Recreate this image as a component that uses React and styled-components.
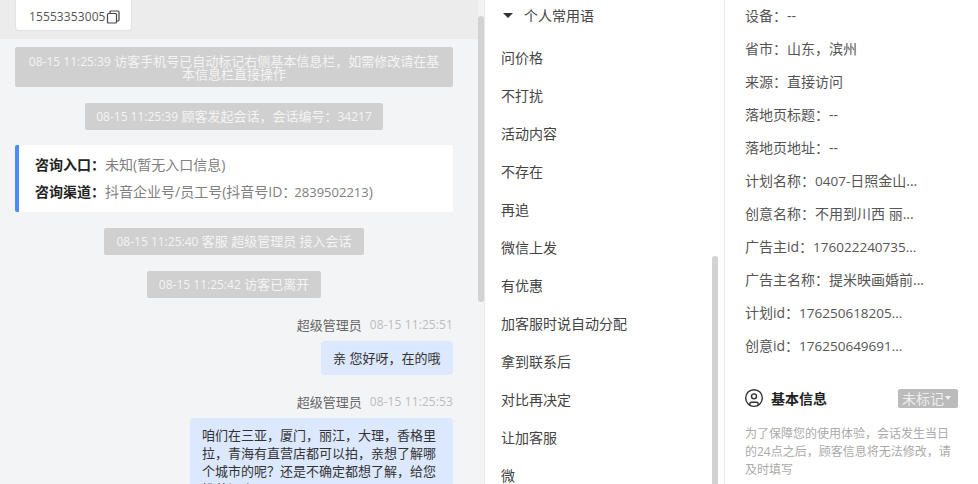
import styled, { createGlobalStyle } from 'styled-components';
import { CircleUser } from 'lucide-react';

const fontStack = '"Open Sans", "Noto Sans CJK SC", sans-serif';

const GlobalStyle = createGlobalStyle`
  html, body { margin: 0; padding: 0; background: #fff; }
  body { font-family: ${fontStack}; font-size: 14px; }
`;

const Page = styled.div`
  display: flex;
  width: 978px;
  height: 484px;
  overflow: hidden;
`;

/* chat column */
const ChatPanel = styled.div`
  position: relative;
  width: 484px;
  flex: none;
  background: #f3f4f6;
  overflow: hidden;
`;
const ChatScroll = styled.div`
  width: 478px;
  display: flex;
  flex-direction: column;
`;
const PhoneStrip = styled.div`
  height: 39px;
  background: #ececec;
  padding-left: 15px;
`;
const PhoneBox = styled.div`
  display: inline-flex;
  align-items: center;
  width: 117px;
  height: 31px;
  box-sizing: border-box;
  padding: 3px 0 0 13px;
  background: #fff;
  border: 1px solid #e2e2e2;
  border-top: 0;
  border-radius: 0 0 4px 4px;
  color: #555;
  font-size: 12px;
  letter-spacing: 0.1px;
  svg { flex: none; }
`;
const ChatBody = styled.div`
  display: flex;
  flex-direction: column;
  align-items: center;
  padding: 8px 25px 0 15px;
`;
const Notice = styled.div`
  box-sizing: border-box;
  width: ${p => p.$width}px;
  margin-bottom: 16px;
  padding: ${p => (p.$multi ? '8px 12px 5px' : '0')};
  height: ${p => (p.$multi ? '40px' : '27px')};
  line-height: ${p => (p.$multi ? '13px' : '27px')};
  background: #d0d0d0;
  border-radius: 2px;
  color: #f4f4f4;
  font-size: 13px;
  text-align: center;
  white-space: ${p => (p.$multi ? 'normal' : 'nowrap')};
`;
const Stamp = styled.span`
  font-size: 12px;
`;
const SourceCard = styled.div`
  box-sizing: border-box;
  width: 438px;
  height: 67px;
  margin: -1px 0 16px;
  padding: 6px 0 0 16px;
  background: #fff;
  border-left: 4px solid #4a8cff;
  border-radius: 2px;
  font-size: 14px;
  line-height: 27px;
  color: #808080;
`;
const SourceRow = styled.div`
  white-space: nowrap;
  b { color: #222; font-weight: 700; }
`;
const CardDigits = styled.span`
  font-size: 13px;
  margin-left: -2px;
`;
const MessageList = styled.div`
  width: 100%;
  padding-top: 2px;
`;
const Message = styled.div`
  display: flex;
  flex-direction: column;
  align-items: flex-end;
  margin-bottom: 18px;
`;
const MessageHead = styled.div`
  display: flex;
  gap: 8px;
  height: 18px;
  line-height: 18px;
  margin-bottom: 7px;
  color: #666;
  font-size: 13px;
  span { color: #bdbdbd; font-size: 12px; letter-spacing: 0.1px; }
`;
const Bubble = styled.div`
  box-sizing: border-box;
  width: ${p => p.$width}px;
  padding: 8px 12px;
  background: #dce8fd;
  border-radius: 4px;
  color: #333;
  font-size: 13px;
  line-height: 18px;
`;
const Thumb = styled.div`
  position: absolute;
  left: ${p => p.$left}px;
  top: ${p => p.$top}px;
  bottom: ${p => (p.$bottom === undefined ? 'auto' : `${p.$bottom}px`)};
  height: ${p => (p.$height ? `${p.$height}px` : 'auto')};
  width: 6px;
  background: #d2d2d2;
  border-radius: 3px 3px ${p => (p.$height ? '3px 3px' : '0 0')};
`;

/* quick replies column */
const PhrasePanel = styled.div`
  position: relative;
  width: 241px;
  flex: none;
  box-sizing: border-box;
  border-left: 1px solid #e8e8e8;
  border-right: 1px solid #e8e8e8;
  color: #444;
  font-size: 14px;
  overflow: hidden;
`;
const PhraseHead = styled.div`
  display: flex;
  align-items: center;
  height: 30px;
  padding-left: 18px;
  margin-bottom: 9px;
`;
const Caret = styled.i`
  width: 0;
  height: 0;
  margin-right: 11px;
  border: 5px solid transparent;
  border-top: 5px solid #333;
  border-bottom: 0;
`;
const Phrase = styled.div`
  height: 38px;
  line-height: 38px;
  padding-left: 16px;
`;

/* visitor info column */
const InfoPanel = styled.div`
  flex: 1;
  padding-left: 20px;
  color: #555;
  font-size: 14px;
`;
const InfoRow = styled.div`
  height: 33px;
  line-height: 32px;
  white-space: nowrap;
`;
const InfoDigits = styled.span`
  font-size: 13.5px;
`;
const InfoHead = styled.div`
  display: flex;
  align-items: center;
  width: 213px;
  height: 20px;
  margin-top: 25px;
  color: #222;
  font-weight: 700;
  svg { margin: 0 7px 0 -1px; }
`;
const Tag = styled.div`
  display: flex;
  align-items: center;
  height: 19px;
  margin-left: auto;
  padding: 0 7px 0 4px;
  background: #bbb;
  border-radius: 2px;
  color: #eee;
  font-size: 14px;
  font-weight: 400;
  i {
    width: 0;
    height: 0;
    margin-left: 1px;
    border: 3.5px solid transparent;
    border-top: 4px solid #f2f2f2;
    border-bottom: 0;
  }
`;
const InfoHint = styled.div`
  width: 206px;
  margin-top: 17px;
  color: #aaa;
  font-size: 12px;
  line-height: 18px;
`;

const laterNotices = [
  { width: 260, stamp: '08-15 11:25:40', text: ' 客服 超级管理员 接入会话' },
  { width: 174, stamp: '08-15 11:25:42', text: ' 访客已离开' },
];
const phrases = ['问价格', '不打扰', '活动内容', '不存在', '再追', '微信上发', '有优惠', '加客服时说自动分配', '拿到联系后', '对比再决定', '让加客服', '微'];
const infoRows = [
  { label: '设备：', value: '--' },
  { label: '省市：', value: '山东，滨州' },
  { label: '来源：', value: '直接访问' },
  { label: '落地页标题：', value: '--' },
  { label: '落地页地址：', value: '--' },
  { label: '计划名称：', digits: '0407-', value: '日照金山...' },
  { label: '创意名称：', value: '不用到川西 丽...' },
  { label: '广告主id：', digits: '176022240735...' },
  { label: '广告主名称：', value: '提米映画婚前...' },
  { label: '计划id：', digits: '176250618205...' },
  { label: '创意id：', digits: '176250649691...' },
];

function CopyIcon() {
  return (
    <svg width="14" height="14" viewBox="0 0 14 14" fill="none" stroke="#444" strokeWidth="1.2">
      <rect x="1.500" y="3.500" width="9" height="9.500" rx="1" />
      <path d="M4 3.500V2a1 1 0 0 1 1-1h7a1 1 0 0 1 1 1v8a1 1 0 0 1-1 1h-1.500" />
    </svg>
  );
}

export default function App() {
  return (
    <Page>
      <GlobalStyle />
      <ChatPanel>
        <ChatScroll>
          <PhoneStrip>
            <PhoneBox>15553353005<CopyIcon /></PhoneBox>
          </PhoneStrip>
          <ChatBody>
            <Notice $width={438} $multi><Stamp>08-15 11:25:39</Stamp> 访客手机号已自动标记右侧基本信息栏，如需修改请在基本信息栏直接操作</Notice>
            <Notice $width={298}><Stamp>08-15 11:25:39</Stamp> 顾客发起会话，会话编号：<Stamp>34217</Stamp></Notice>
            <SourceCard>
              <SourceRow><b>咨询入口：</b>未知(暂无入口信息)</SourceRow>
              <SourceRow><b>咨询渠道：</b>抖音企业号/员工号(抖音号ID：<CardDigits>2839502213</CardDigits>)</SourceRow>
            </SourceCard>
            {laterNotices.map(n => <Notice key={n.stamp} $width={n.width}><Stamp>{n.stamp}</Stamp>{n.text}</Notice>)}
            <MessageList>
              <Message>
                <MessageHead>超级管理员<span>08-15 11:25:51</span></MessageHead>
                <Bubble $width={132}>亲 您好呀，在的哦</Bubble>
              </Message>
              <Message>
                <MessageHead>超级管理员<span>08-15 11:25:53</span></MessageHead>
                <Bubble $width={263}>咱们在三亚，厦门，丽江，大理，香格里拉，青海有直营店都可以拍，亲想了解哪个城市的呢？还是不确定都想了解，给您推荐门店</Bubble>
              </Message>
            </MessageList>
          </ChatBody>
        </ChatScroll>
        <Thumb $left={478} $top={16} $height={286} />
      </ChatPanel>
      <PhrasePanel>
        <PhraseHead><Caret />个人常用语</PhraseHead>
        {phrases.map(p => <Phrase key={p}>{p}</Phrase>)}
        <Thumb $left={227} $top={256} $bottom={0} />
      </PhrasePanel>
      <InfoPanel>
        {infoRows.map(r => (
          <InfoRow key={r.label}>{r.label}{r.digits && <InfoDigits>{r.digits}</InfoDigits>}{r.value}</InfoRow>
        ))}
        <InfoHead>
          <CircleUser size={20} strokeWidth={1.7} color="#333" />
          基本信息
          <Tag>未标记<i /></Tag>
        </InfoHead>
        <InfoHint>为了保障您的使用体验，会话发生当日的24点之后，顾客信息将无法修改，请及时填写</InfoHint>
      </InfoPanel>
    </Page>
  );
}
